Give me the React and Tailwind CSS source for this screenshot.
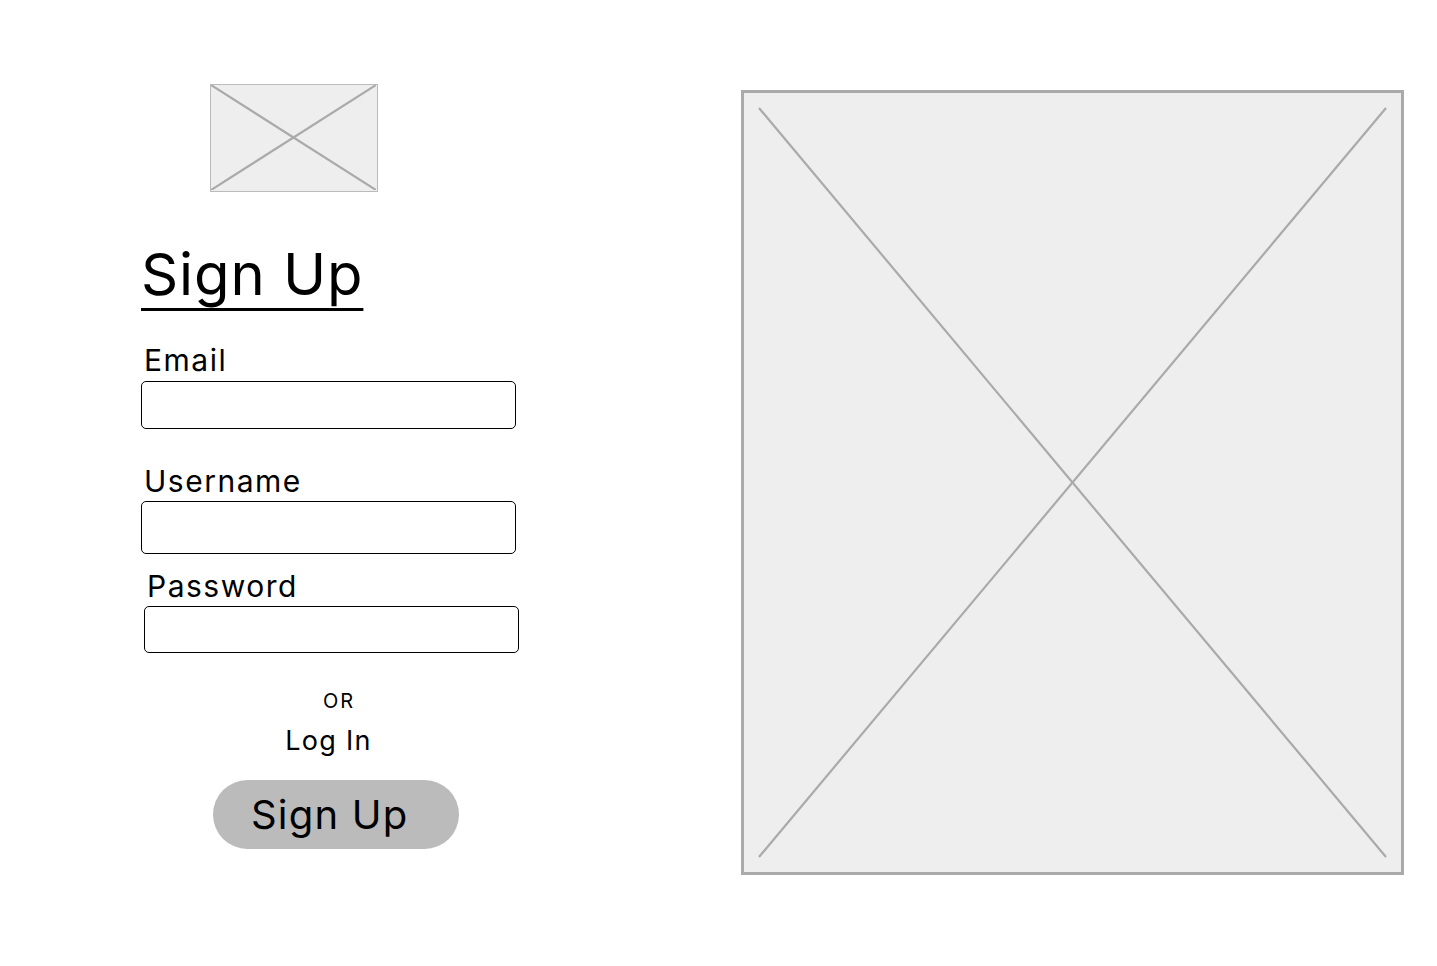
import React from 'react';

function Placeholder({ className, w, h, inset = 0 }) {
  return (
    <div className={className}>
      <svg width={w} height={h} viewBox={`0 0 ${w} ${h}`} className="block">
        <line x1={inset} y1={inset} x2={w - inset} y2={h - inset} stroke="#aaaaaa" strokeWidth="2.2" />
        <line x1={w - inset} y1={inset} x2={inset} y2={h - inset} stroke="#aaaaaa" strokeWidth="2.2" />
      </svg>
    </div>
  );
}

function Field({ label, labelClass, inputClass }) {
  return (
    <>
      <label className={`block text-[30px] leading-none tracking-[1.5px] text-black ${labelClass}`}>{label}</label>
      <input type="text" className={`block w-[375px] rounded-[5px] border-[1.5px] border-black bg-white ${inputClass}`} />
    </>
  );
}

export default function App() {
  return (
    <div className="min-h-[966px] bg-white font-['Inter',sans-serif] text-black">
      <div className="flex pt-[84px]">
        <div className="w-[741px] shrink-0 pl-[141px]">
          <Placeholder className="ml-[69px] w-[168px] h-[108px] border-[1.5px] border-[#bbbbbb] bg-[#eeeeee]" w={165} h={105} />

          <h1 className="mt-[53px] text-[58px] leading-none font-normal tracking-[0.9px] underline decoration-[3px] underline-offset-[13px]">
            Sign Up
          </h1>

          <Field label="Email" labelClass="mt-[42px] ml-[3px]" inputClass="mt-[6px] h-[48px]" />
          <Field label="Username" labelClass="mt-[37px] ml-[3px]" inputClass="mt-[5px] h-[53px]" />
          <Field label="Password" labelClass="mt-[17px] ml-[6px]" inputClass="mt-[5px] h-[47px] ml-[3px]" />

          <div className="mt-[38px] w-[396px] text-center text-[20px] leading-none tracking-[2px]">OR</div>
          <div className="mt-[16px] w-[375px] text-center text-[27px] leading-none tracking-[1.3px]">Log In</div>

          <button className="mt-[26px] ml-[72px] flex h-[69px] w-[246px] items-center justify-start rounded-full bg-[#bbbbbb] pl-[38px] text-[40px] leading-none tracking-[1.2px] text-black">
            Sign Up
          </button>
        </div>

        <Placeholder className="mt-[6px] w-[663px] h-[785px] border-[3px] border-[#aaaaaa] bg-[#eeeeee]" w={657} h={779} inset={15} />
      </div>
    </div>
  );
}
